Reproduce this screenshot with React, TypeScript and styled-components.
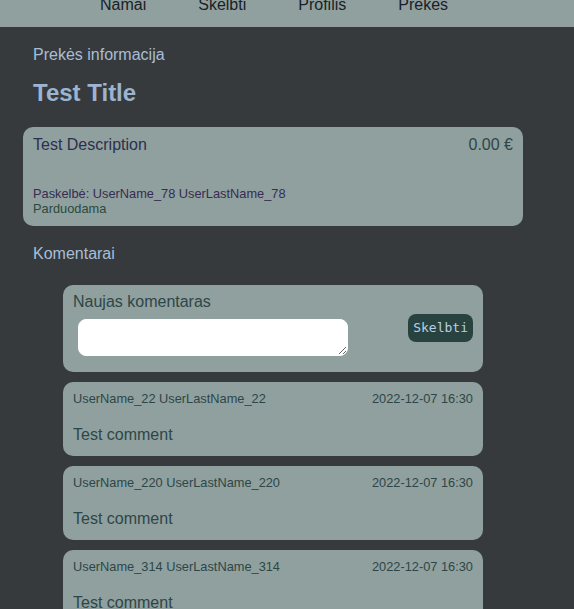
import React, { FC } from 'react';
import styled, { createGlobalStyle } from 'styled-components';

const GlobalStyle = createGlobalStyle`
  html, body {
    margin: 0;
    padding: 0;
    background-color: #363a3c;
    font-family: "Liberation Sans", Arial, sans-serif;
  }
`;

const Nav = styled.nav`
  display: flex;
  gap: 52px;
  height: 27px;
  padding-left: 100px;
  background-color: #8fa09f;
  overflow: hidden;
`;
const NavLink = styled.a`
  margin-top: -4px;
  font-size: 16px;
  line-height: 18px;
  color: #1b2127;
  text-decoration: none;
`;

const Main = styled.main`
  width: 500px;
  margin-left: 23px;
`;
const Label = styled.div<{ $top: number }>`
  margin: ${(p) => p.$top}px 10px 0;
  font-size: 16px;
  line-height: 18px;
  color: #a8bed8;
`;
const Title = styled.h2`
  margin: 15px 10px 20px;
  font-size: 24px;
  line-height: 28px;
  font-weight: bold;
  color: #9db4d0;
`;

const Card = styled.div`
  display: flex;
  flex-direction: column;
  padding: 9px 10px 10px;
  background-color: #8fa09f;
  border-radius: 10px;
`;
const CardHead = styled.div`
  display: flex;
  justify-content: space-between;
  font-size: 16px;
  line-height: 18px;
`;
const Description = styled.span`
  color: #2d2f4e;
`;
const Price = styled.span`
  color: #2d4646;
`;
const Meta = styled.div<{ $color: string }>`
  font-size: 12.8px;
  line-height: 15px;
  color: ${(p) => p.$color};
`;
const MetaBlock = styled.div`
  margin-top: 32px;
`;

const Comments = styled.section`
  display: flex;
  flex-direction: column;
  gap: 10px;
  margin: 22px 40px 0;
`;
const NewComment = styled.form`
  display: flex;
  justify-content: space-between;
  align-items: center;
  padding: 8px 10px 16px;
  background-color: #8fa09f;
  border-radius: 10px;
`;
const NewCommentLeft = styled.div`
  display: flex;
  flex-direction: column;
`;
const NewCommentLabel = styled.label`
  font-size: 16px;
  line-height: 18px;
  color: #2e4646;
`;
const TextArea = styled.textarea`
  box-sizing: border-box;
  width: 270px;
  height: 37px;
  margin: 8px 0 0 5px;
  padding: 4px 8px;
  background-color: #ffffff;
  border: 1px solid #ffffff;
  border-radius: 8px;
  outline: none;
`;
const Button = styled.button`
  height: 28px;
  margin-top: 6px;
  padding: 0 5px;
  background-color: #28433f;
  color: #b8cfe0;
  border: none;
  border-radius: 8px;
  font-family: "DejaVu Sans Mono", "Liberation Mono", monospace;
  font-size: 13px;
`;

const Comment = styled.div`
  display: flex;
  flex-direction: column;
  gap: 20px;
  padding: 9px 10px 12px;
  background-color: #8fa09f;
  border-radius: 10px;
  color: #2e4646;
`;
const CommentHead = styled.div`
  display: flex;
  justify-content: space-between;
  font-size: 12.8px;
  line-height: 15px;
`;
const CommentText = styled.div`
  font-size: 16px;
  line-height: 18px;
`;

interface CommentData {
  author: string;
  date: string;
  text: string;
}

const comments: CommentData[] = [
  { author: 'UserName_22 UserLastName_22', date: '2022-12-07 16:30', text: 'Test comment' },
  { author: 'UserName_220 UserLastName_220', date: '2022-12-07 16:30', text: 'Test comment' },
  { author: 'UserName_314 UserLastName_314', date: '2022-12-07 16:30', text: 'Test comment' },
];

const App: FC = () => (
  <>
    <GlobalStyle />
    <Nav>
      <NavLink href="#">Namai</NavLink>
      <NavLink href="#">Skelbti</NavLink>
      <NavLink href="#">Profilis</NavLink>
      <NavLink href="#">Prekės</NavLink>
    </Nav>
    <Main>
      <Label $top={19}>Prekės informacija</Label>
      <Title>Test Title</Title>
      <Card>
        <CardHead>
          <Description>Test Description</Description>
          <Price>0.00 €</Price>
        </CardHead>
        <MetaBlock>
          <Meta $color="#382c50">Paskelbė: UserName_78 UserLastName_78</Meta>
          <Meta $color="#2c4a3c">Parduodama</Meta>
        </MetaBlock>
      </Card>
      <Label $top={19}>Komentarai</Label>
      <Comments>
        <NewComment onSubmit={(e) => e.preventDefault()}>
          <NewCommentLeft>
            <NewCommentLabel>Naujas komentaras</NewCommentLabel>
            <TextArea />
          </NewCommentLeft>
          <Button type="submit">Skelbti</Button>
        </NewComment>
        {comments.map((c) => (
          <Comment key={c.author}>
            <CommentHead>
              <span>{c.author}</span>
              <span>{c.date}</span>
            </CommentHead>
            <CommentText>{c.text}</CommentText>
          </Comment>
        ))}
      </Comments>
    </Main>
  </>
);

export default App;
